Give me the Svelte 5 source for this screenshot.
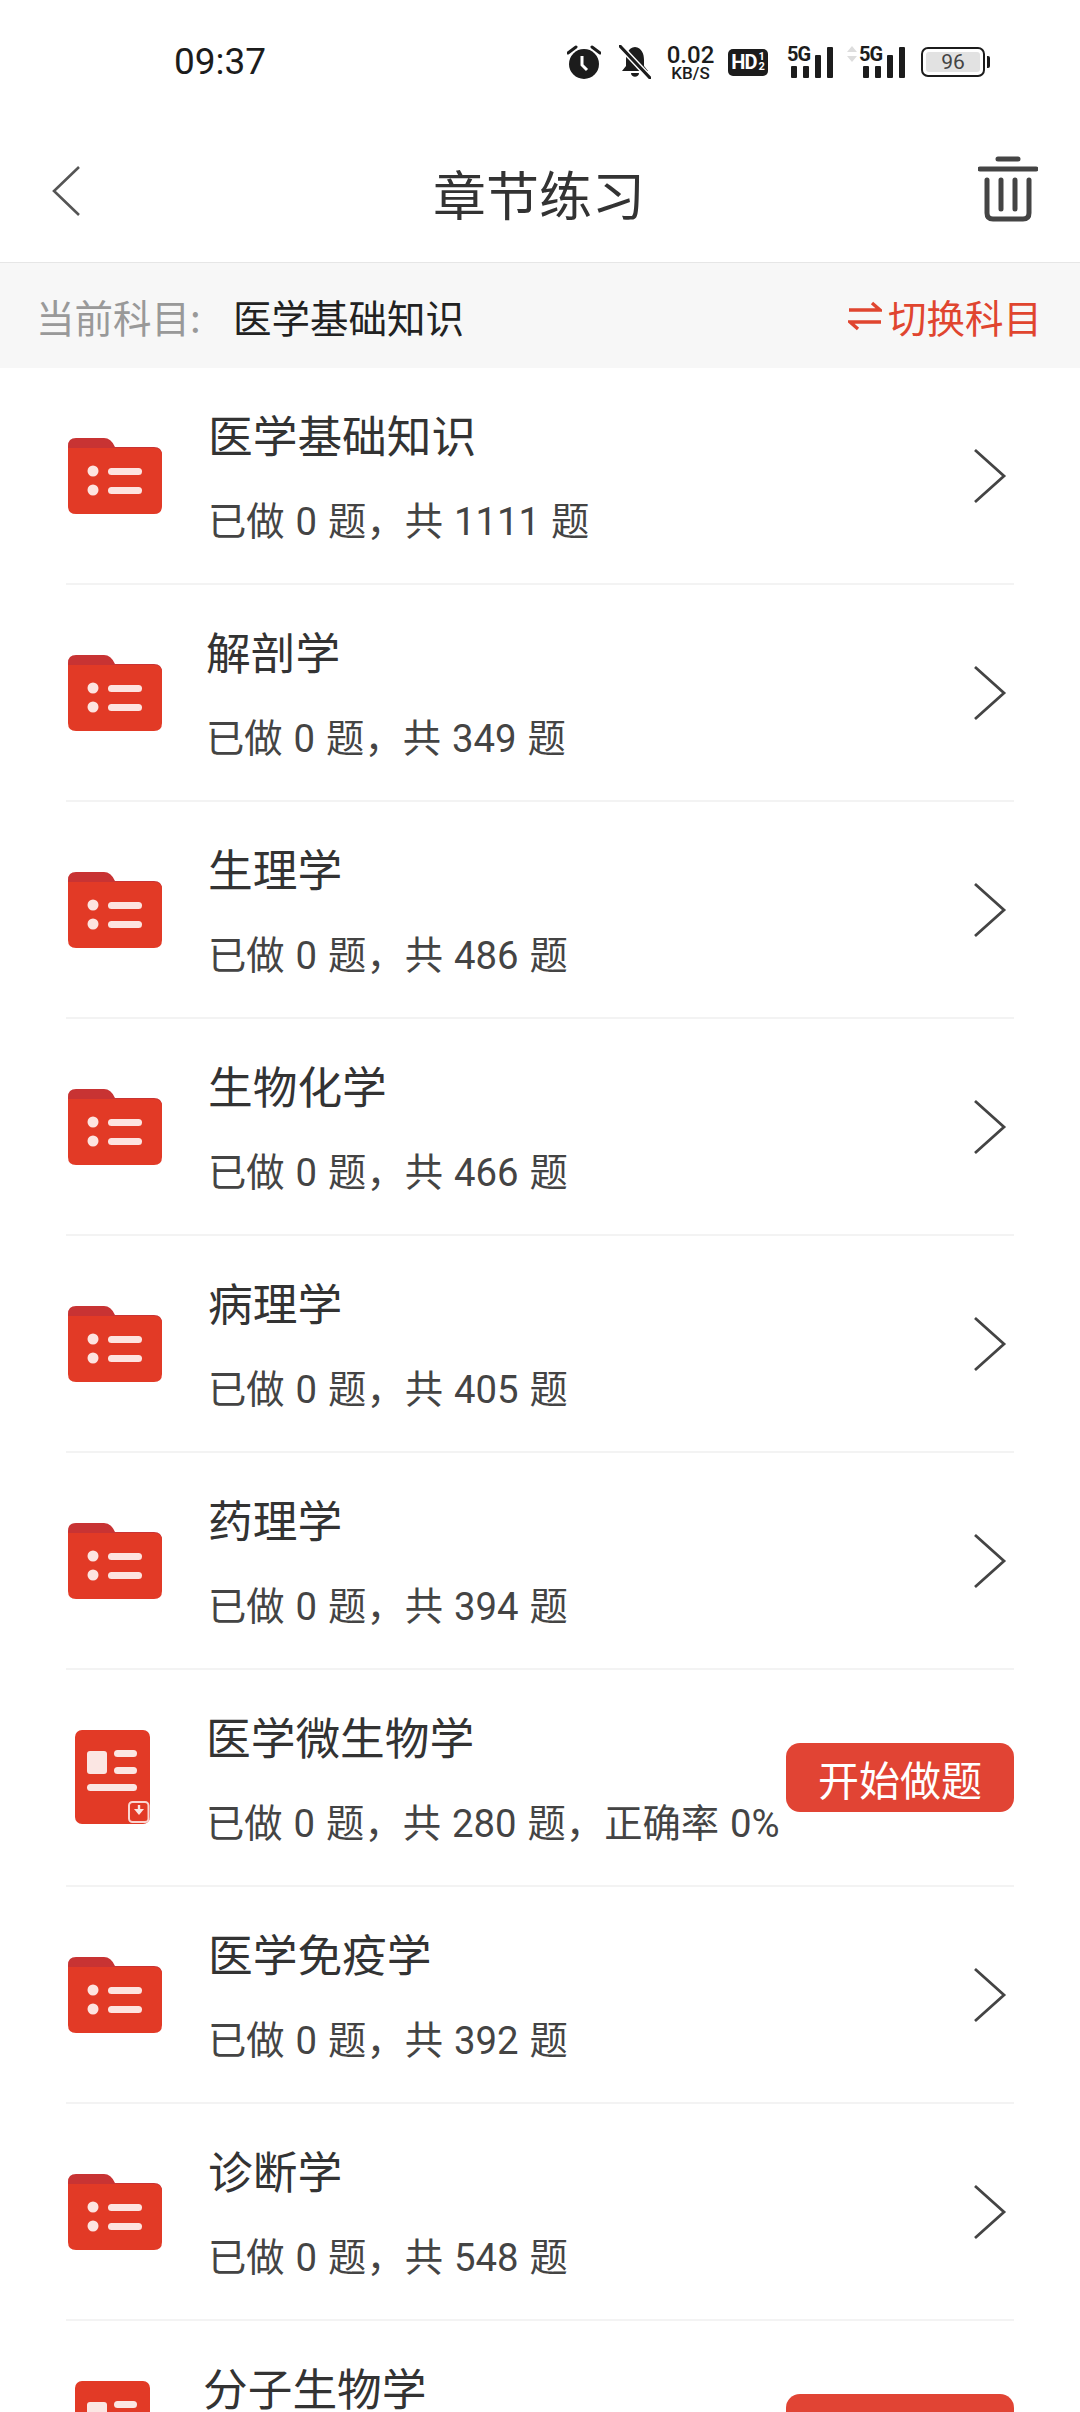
<script>
  const rows = [
    { title: '医学基础知识', done: 0, total: 1111, x: 0 },
    { title: '解剖学', done: 0, total: 349, x: -2 },
    { title: '生理学', done: 0, total: 486, x: 0 },
    { title: '生物化学', done: 0, total: 466, x: 0 },
    { title: '病理学', done: 0, total: 405, x: 0 },
    { title: '药理学', done: 0, total: 394, x: 0 },
    { title: '医学微生物学', done: 0, total: 280, x: -2, paper: true },
    { title: '医学免疫学', done: 0, total: 392, x: 0 },
    { title: '诊断学', done: 0, total: 548, x: 0 },
    { title: '分子生物学', x: -5, paper: true }
  ];
</script>

<div class="page">
  <div class="status">
    <span class="time">09:37</span>
    <div class="status-icons">
      <svg class="alarm" width="34" height="36" viewBox="0 0 34 36">
        <circle cx="17" cy="20" r="15" fill="#1c1c1c" />
        <path d="M1 9 L9 3 M33 9 L25 3" stroke="#1c1c1c" stroke-width="3" stroke-linecap="round" />
        <path d="M15 12 V21 L20 26" stroke="#fff" stroke-width="3" fill="none" />
      </svg>
      <svg class="bell" width="32" height="34" viewBox="0 0 32 34">
        <path d="M16 2 C9 3 7 9 7 15 V21 L3 26 H29 L25 21 V15 C25 9 23 3 16 2Z M12 28 H20 C20 33 12 33 12 28Z" fill="#1c1c1c" />
        <path d="M1 1 L31 33" stroke="#fff" stroke-width="6" />
        <path d="M1 1 L31 33" stroke="#1c1c1c" stroke-width="3" stroke-linecap="round" />
      </svg>
      <div class="speed">
        <span class="speed-num">0.02</span>
        <span class="speed-unit">KB/S</span>
      </div>
      <div class="hd"><span>HD</span><span class="hd-sub"><i>1</i><i>2</i></span></div>
      <div class="signal">
        <span class="five-g">5G</span>
        <div class="bars"><b></b><b></b><b></b><b></b></div>
      </div>
      <div class="signal second">
        <svg class="updown" width="12" height="16" viewBox="0 0 12 16"><path d="M6 0 L11 6 H1Z M6 16 L11 10 H1Z" fill="#ddd" /></svg>
        <span class="five-g">5G</span>
        <div class="bars"><b></b><b></b><b></b><b></b></div>
      </div>
      <div class="battery"><span>96</span></div>
    </div>
  </div>

  <header class="nav">
    <svg class="back" width="30" height="52" viewBox="0 0 30 52">
      <path d="M28 2 L3 26 L28 50" fill="none" stroke="#555" stroke-width="2.6" />
    </svg>
    <h1>章节练习</h1>
    <svg class="trash" width="60" height="66" viewBox="0 0 60 66">
      <path d="M20 3 H40 M2 13 H58" stroke="#444" stroke-width="5" stroke-linecap="round" />
      <path d="M9 24 V57 Q9 63 15 63 H45 Q51 63 51 57 V24" fill="none" stroke="#444" stroke-width="5" stroke-linecap="round" />
      <path d="M23 24 V53 M37 24 V53" stroke="#444" stroke-width="5" stroke-linecap="round" />
    </svg>
  </header>

  <div class="subject">
    <span class="subject-label">当前科目:</span>
    <span class="subject-name">医学基础知识</span>
    <span class="switch">
      <svg width="34" height="30" viewBox="0 0 34 30">
        <path d="M1 9 H32 L24 2 M33 21 H2 L10 28" fill="none" stroke="#e0452f" stroke-width="3.4" />
      </svg>
      切换科目
    </span>
  </div>

  <ul class="list">
    {#each rows as row}
      <li class="row">
        {#if row.paper}
          <svg class="icon paper" width="75" height="94" viewBox="0 0 75 94">
            <rect width="75" height="94" rx="7" fill="#e23a26" />
            <rect x="12" y="21" width="20" height="23" rx="3" fill="#fbe6e3" />
            <rect x="39" y="20" width="23" height="7" rx="3.5" fill="#fbe6e3" />
            <rect x="39" y="37" width="23" height="7" rx="3.5" fill="#fbe6e3" />
            <rect x="12" y="54" width="50" height="7" rx="3.5" fill="#fbe6e3" />
            <rect x="54" y="72" width="19.5" height="20" rx="3.5" fill="none" stroke="#fbd5d0" stroke-width="2" />
            <path d="M64 75 V81" stroke="#fbe6e3" stroke-width="2.4" />
            <path d="M59 79 H69 L64 85Z" fill="#fbe6e3" />
          </svg>
        {:else}
          <svg class="icon folder" width="94" height="76" viewBox="0 0 94 76">
            <path d="M0 8 Q0 0 8 0 H36 Q43 0 47 9 H86 Q94 9 94 17 V30 H0Z" fill="#c83333" />
            <path d="M0 10 H86 Q94 10 94 18 V68 Q94 76 86 76 H8 Q0 76 0 68Z" fill="#e23a26" />
            <circle cx="25" cy="33" r="5.5" fill="#fde4e0" />
            <circle cx="25" cy="52" r="5.5" fill="#fde4e0" />
            <rect x="40" y="30" width="34" height="7" rx="3.5" fill="#fde4e0" />
            <rect x="40" y="49" width="34" height="7" rx="3.5" fill="#fde4e0" />
          </svg>
        {/if}
        <div class="text" style="margin-left: {row.x}px">
          <div class="title">{row.title}</div>
          <div class="meta">
            {#if row.total}已做 {row.done} 题，共 {row.total} 题{row.paper ? '，正确率 0%' : ''}{/if}
          </div>
        </div>
        {#if row.paper}
          <button class="start">开始做题</button>
        {:else}
          <svg class="chevron" width="34" height="56" viewBox="0 0 34 56">
            <path d="M2 2 L31 28 L2 54" fill="none" stroke="#444" stroke-width="2.8" />
          </svg>
        {/if}
      </li>
    {/each}
  </ul>
</div>

<style>
  :global(body) {
    margin: 0;
    background: #fff;
  }

  .page {
    width: 1080px;
    height: 2412px;
    overflow: hidden;
    background: #fff;
    font-family: "Noto Sans CJK SC", "Noto Sans", sans-serif;
    color: #333;
  }

  .status {
    height: 124px;
    display: flex;
    align-items: flex-start;
    justify-content: space-between;
    padding: 41px 95px 0 174px;
    box-sizing: border-box;
    color: #1c1c1c;
  }

  .time {
    font-family: Roboto, sans-serif;
    font-size: 37px;
    line-height: 42px;
  }

  .status-icons {
    display: flex;
    align-items: center;
    height: 42px;
  }

  .alarm { margin-right: 18px; }
  .bell { margin-right: 14px; }

  .speed {
    display: flex;
    flex-direction: column;
    align-items: center;
    width: 51px;
    font-family: Roboto, sans-serif;
    margin-right: 12px;
  }

  .speed-num {
    font-size: 24px;
    line-height: 22px;
    font-weight: 500;
  }

  .speed-unit {
    font-size: 17px;
    line-height: 15px;
    font-weight: 500;
  }

  .hd {
    width: 40px;
    height: 27px;
    background: #1c1c1c;
    border-radius: 5px;
    color: #fff;
    display: flex;
    align-items: center;
    justify-content: center;
    font-family: Roboto, sans-serif;
    font-size: 20px;
    font-weight: 700;
    margin-right: 19px;
    letter-spacing: -1px;
  }

  .hd-sub {
    display: flex;
    flex-direction: column;
    font-size: 11px;
    line-height: 10px;
    margin-left: 2px;
    letter-spacing: 0;
  }

  .hd-sub i { font-style: normal; }

  .signal {
    display: flex;
    position: relative;
    height: 32px;
    width: 46px;
    justify-content: flex-end;
    margin-right: 13px;
  }

  .signal.second {
    width: 59px;
    margin-right: 16px;
  }

  .five-g {
    position: absolute;
    font-family: Roboto, sans-serif;
    font-weight: 700;
    font-size: 20px;
    line-height: 18px;
    letter-spacing: -1px;
    left: 0;
    top: -1px;
  }

  .second .five-g { left: 13px; }

  .updown {
    position: absolute;
    left: 0;
    top: 0;
  }

  .bars {
    display: flex;
    align-items: flex-end;
    gap: 6px;
  }

  .bars b {
    width: 6px;
    height: 12px;
    background: #1c1c1c;
    border-radius: 1px;
  }

  .bars b:nth-child(3) { height: 23px; }
  .bars b:nth-child(4) { height: 31px; }

  .battery {
    width: 64px;
    height: 30px;
    box-sizing: border-box;
    border: 2px solid #1c1c1c;
    border-radius: 7px;
    padding: 3px;
    position: relative;
    display: flex;
  }

  .battery::after {
    content: "";
    position: absolute;
    right: -7px;
    top: 7px;
    width: 3px;
    height: 12px;
    background: #1c1c1c;
    border-radius: 0 2px 2px 0;
  }

  .battery span {
    flex: 1;
    background: #e2e2e2;
    border-radius: 3px;
    text-align: center;
    font-family: Roboto, sans-serif;
    font-size: 21px;
    line-height: 20px;
    color: #444;
  }

  .nav {
    height: 139px;
    display: flex;
    align-items: center;
    justify-content: space-between;
    padding: 0 42px 0 51px;
    box-sizing: border-box;
    position: relative;
    border-bottom: 1px solid #e6e6e6;
  }

  .nav h1 {
    position: absolute;
    left: 0;
    right: 0;
    margin: 0;
    padding-right: 2px;
    text-align: center;
    font-size: 53px;
    line-height: 70px;
    font-weight: 400;
    color: #333;
  }

  .trash { margin-top: -8px; }
  .back { margin-top: -4px; }

  .subject {
    height: 105px;
    background: #f7f7f7;
    display: flex;
    align-items: center;
    padding: 0 38px 0 36px;
    font-size: 38.5px;
  }

  .subject-label {
    color: #999;
    width: 197px;
  }

  .subject-name {
    color: #222;
  }

  .switch {
    margin-left: auto;
    color: #e0452f;
    display: flex;
    align-items: center;
    gap: 6px;
  }

  .list {
    list-style: none;
    margin: 0 66px;
    padding: 0;
  }

  .row {
    height: 217px;
    box-sizing: border-box;
    display: flex;
    align-items: center;
    border-bottom: 2px solid #f3f3f3;
    position: relative;
  }

  .icon.folder {
    margin-left: 2px;
    margin-right: 46px;
    flex: none;
  }

  .icon.paper {
    margin-left: 9px;
    margin-right: 58px;
    flex: none;
    margin-top: -2px;
  }

  .text {
    flex: 1;
    min-width: 0;
    margin-top: 3px;
    font-family: Roboto, "Noto Sans CJK SC", sans-serif;
  }

  .title {
    font-size: 44.7px;
    line-height: 62px;
    color: #333;
  }

  .meta {
    font-size: 38.3px;
    line-height: 50px;
    height: 50px;
    margin-top: 28px;
    color: #444;
    white-space: nowrap;
    word-spacing: 1.5px;
  }

  .chevron {
    flex: none;
    margin-right: 7px;
  }

  .start {
    position: absolute;
    right: 0;
    top: 73px;
    width: 228px;
    height: 69px;
    border: 0;
    border-radius: 14px;
    background: #e14434;
    color: #fff;
    font-family: inherit;
    font-size: 41px;
    padding: 0;
  }
</style>
